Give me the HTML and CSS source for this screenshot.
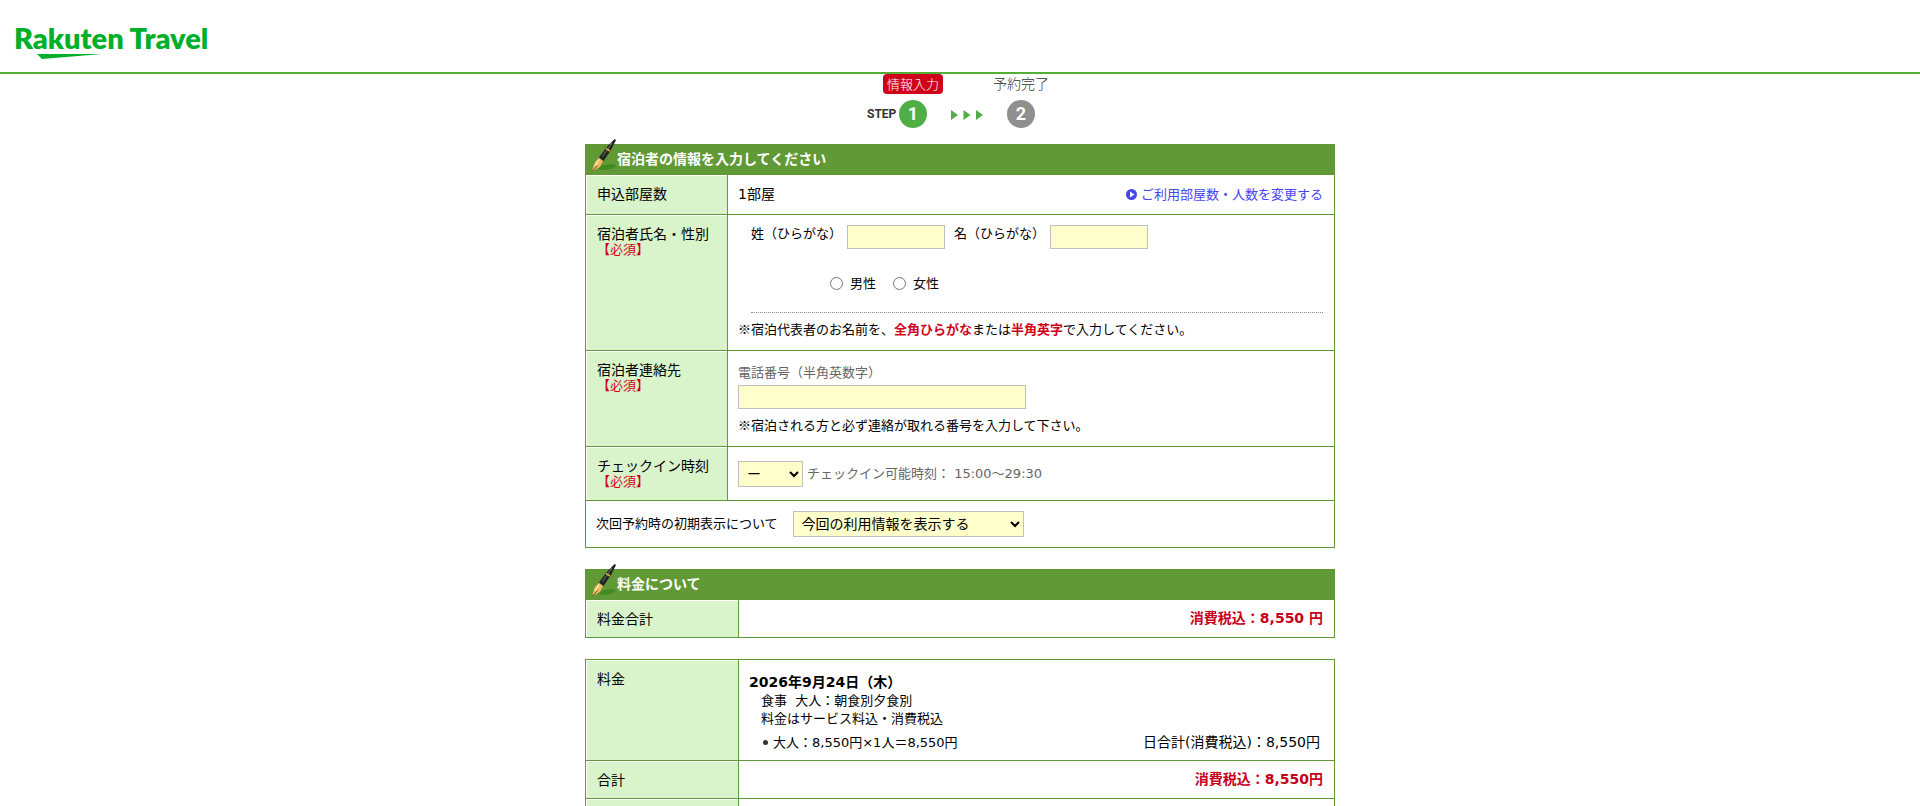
FILE: index.html
```html
<!DOCTYPE html>
<html lang="ja">
<head>
  <meta charset="UTF-8">
  <title>Rakuten Travel</title>
  <meta name="viewport" content="width=device-width, initial-scale=1.0">
  <link rel="stylesheet" href="styles.css">
</head>
<body>
  <svg class="defs" aria-hidden="true">
    <symbol id="pen" viewBox="0 0 26 33">
      <ellipse cx="16" cy="28" rx="9" ry="2.500" transform="rotate(-8 16 28)" fill="#3f8a22"/>
      <path d="M23.500 0 L25 1 L20 11 L12.500 22 L8 18.500 L15 9 Z" fill="#222"/>
      <path d="M21 4 L11.500 17.500" stroke="#777" stroke-width="1"/>
      <path d="M15 9.500 L19 12" stroke="#d9a441" stroke-width="1.500"/>
      <path d="M8 19 L12 22 L9 28 L1.500 32 L2 28.500 L4 23 Z" fill="#f0b95e"/>
      <path d="M8 20.500 L4 27" stroke="#fbe3ae" stroke-width="1.500"/>
      <path d="M6.500 26.500 L1.500 32" stroke="#6b4a18" stroke-width="1"/>
    </symbol>
  </svg>

  <header class="header">
    <a href="#" class="logo">
      <span class="logo-text">Rakuten Travel</span>
      <svg class="logo-mark" viewBox="0 0 65 5"><path d="M0 0 H65 L5 5 Z" fill="#00b02a"/></svg>
    </a>
  </header>

  <div class="steps">
    <div class="step-labels">
      <span class="step-current">情報入力</span>
      <span class="step-next">予約完了</span>
    </div>
    <div class="step-numbers">
      <span class="step-word">STEP</span>
      <span class="circle circle-on">1</span>
      <svg class="arrows" width="32" height="10" viewBox="0 0 32 10">
        <path d="M0 0 L7 5 L0 10 Z M12.500 0 L19.500 5 L12.500 10 Z M25 0 L32 5 L25 10 Z" fill="#50ae47"/>
      </svg>
      <span class="circle">2</span>
    </div>
  </div>

  <main class="container">
    <form class="section">
      <h2 class="title"><svg class="pen"><use href="#pen"/></svg>宿泊者の情報を入力してください</h2>
      <table class="form-table">
        <tr>
          <th scope="row">申込部屋数</th>
          <td>
            <div class="split">
              <span>1部屋</span>
              <a href="#" class="change-link">
                <svg width="11" height="11" viewBox="0 0 11 11"><circle cx="5.500" cy="5.500" r="5.500" fill="#4545ee"/><path d="M4 2.500 L8.500 5.500 L4 8.500 Z" fill="#fff"/></svg>
                ご利用部屋数・人数を変更する
              </a>
            </div>
          </td>
        </tr>
        <tr>
          <th scope="row">宿泊者氏名・性別<span class="required">【必須】</span></th>
          <td class="name-cell">
            <div class="guest">
              <div class="names">
                <label for="lastName">姓（ひらがな）</label>
                <input type="text" id="lastName" name="lastName" class="field">
                <label for="firstName">名（ひらがな）</label>
                <input type="text" id="firstName" name="firstName" class="field">
              </div>
              <div class="gender">
                <input type="radio" id="male" name="gender"><label for="male">男性</label>
                <input type="radio" id="female" name="gender"><label for="female">女性</label>
              </div>
            </div>
            <p class="note">※宿泊代表者のお名前を、<strong>全角ひらがな</strong>または<strong>半角英字</strong>で入力してください。</p>
          </td>
        </tr>
        <tr>
          <th scope="row">宿泊者連絡先<span class="required">【必須】</span></th>
          <td class="phone-cell">
            <label for="phone" class="hint">電話番号（半角英数字）</label>
            <input type="tel" id="phone" name="phone" class="field field-phone">
            <p class="note">※宿泊される方と必ず連絡が取れる番号を入力して下さい。</p>
          </td>
        </tr>
        <tr>
          <th scope="row"><label for="checkin">チェックイン時刻</label><span class="required">【必須】</span></th>
          <td class="checkin-cell">
            <div class="inline">
              <select id="checkin" name="checkin" class="field select-time"><option>ー</option></select>
              <span class="hint">チェックイン可能時刻： 15:00〜29:30</span>
            </div>
          </td>
        </tr>
        <tr>
          <td colspan="2">
            <div class="inline default-view">
              <label for="view">次回予約時の初期表示について</label>
              <select id="view" name="view" class="field select-view"><option>今回の利用情報を表示する</option></select>
            </div>
          </td>
        </tr>
      </table>
    </form>

    <section class="section">
      <h2 class="title"><svg class="pen"><use href="#pen"/></svg>料金について</h2>
      <table class="price-table">
        <tr>
          <th scope="row">料金合計</th>
          <td class="price">消費税込：8,550 円</td>
        </tr>
      </table>
    </section>

    <table class="price-table">
      <tr>
        <th scope="row">料金</th>
        <td class="detail-cell">
          <p class="date">2026年9月24日（木）</p>
          <p class="detail">食事&nbsp; 大人：朝食別夕食別</p>
          <p class="detail">料金はサービス料込・消費税込</p>
          <div class="split day">
            <span class="per-person">大人：8,550円×1人＝8,550円</span>
            <span>日合計(消費税込)：8,550円</span>
          </div>
        </td>
      </tr>
      <tr>
        <th scope="row">合計</th>
        <td class="price">消費税込：8,550円</td>
      </tr>
      <tr>
        <th></th>
        <td></td>
      </tr>
    </table>
  </main>
</body>
</html>
```

FILE: styles.css
```css
* {
  margin: 0;
  padding: 0;
  box-sizing: border-box;
}

body {
  font-family: "DejaVu Sans", "Noto Sans CJK JP", sans-serif;
  font-size: 14px;
  line-height: 16px;
  color: #000;
  background: #fff;
}

.defs {
  position: absolute;
  width: 0;
  height: 0;
}

/* header */
.header {
  padding: 23px 14px 13px;
  border-bottom: 2px solid #54ae36;
}

.logo {
  display: inline-block;
  vertical-align: top;
  color: #00b02a;
  text-decoration: none;
}

.logo-text {
  display: block;
  font-family: Lato, sans-serif;
  font-size: 29px;
  font-weight: 800;
  line-height: 30px;
}

.logo-mark {
  display: block;
  width: 65px;
  height: 5px;
  margin: 1px 0 0 23px;
}

/* steps */
.steps {
  width: 186px;
  margin: 0 auto 16px;
}

.step-labels {
  display: flex;
  gap: 50px;
  margin-left: 16px;
  line-height: 20px;
  font-family: "Noto Sans CJK JP", sans-serif;
  font-weight: 300;
}

.step-current {
  width: 60px;
  border-radius: 4px;
  background: #d0021b;
  color: #fff;
  font-size: 13px;
  text-align: center;
}

.step-next {
  color: #333;
  line-height: 18px;
}

.step-numbers {
  display: flex;
  align-items: center;
  margin-top: 6px;
  font-family: Roboto, sans-serif;
  font-weight: 700;
}

.step-word {
  width: 32px;
  font-size: 12px;
  color: #333;
}

.circle {
  width: 28px;
  border-radius: 50%;
  background: #8f8f8f;
  color: #fff;
  font-size: 18px;
  line-height: 28px;
  text-align: center;
}

.circle-on {
  background: #50ae47;
}

.arrows {
  margin: 2px 24px 0;
}

/* sections */
.container {
  max-width: 750px;
  margin: 0 auto;
}

.section {
  margin-bottom: 21px;
}

.title {
  position: relative;
  padding-left: 32px;
  background: #629937;
  color: #fff;
  font-size: 14px;
  line-height: 30px;
}

.pen {
  position: absolute;
  top: -5px;
  left: 6px;
  width: 26px;
  height: 33px;
}

table {
  width: 100%;
  border-collapse: collapse;
  table-layout: fixed;
}

th,
td {
  border: 1px solid #629937;
  text-align: left;
  vertical-align: top;
}

th {
  width: 142px;
  padding: 11px 0 10px 11px;
  background: #d9f3cb;
  box-shadow: inset 1px 1px 0 #fff;
  font-weight: normal;
  line-height: 16px;
}

.price-table th {
  width: 153px;
}

td {
  padding: 10px 11px 10px 10px;
}

.split {
  display: flex;
  justify-content: space-between;
  line-height: 19px;
}

.change-link {
  display: flex;
  align-items: center;
  gap: 4px;
  color: #4545ee;
  font-size: 13px;
  line-height: 17px;
  text-decoration: none;
}

.required {
  display: block;
  color: #d0021b;
  font-size: 13px;
}

.field {
  width: 98px;
  height: 24px;
  border: 1px solid #c0c0c0;
  border-radius: 0;
  background: #ffc;
  font-family: inherit;
  font-size: 14px;
}

.guest {
  margin-left: 13px;
  padding-bottom: 19px;
  border-bottom: 1px dotted #888;
  font-size: 13px;
}

.names {
  display: flex;
  gap: 5px;
  line-height: 17px;
}

.names input + label {
  margin-left: 4px;
}

.gender {
  display: flex;
  align-items: center;
  margin: 26px 0 0 79px;
  line-height: 18px;
}

.gender input {
  width: 13px;
  height: 13px;
  margin-bottom: 2px;
}

.gender label {
  margin: 0 17px 0 7px;
}

.note {
  margin-top: 8px;
  font-family: "Noto Sans CJK JP", sans-serif;
  font-size: 13px;
}

.note strong {
  color: #d0021b;
}

.name-cell {
  padding-bottom: 13px;
}

.phone-cell {
  padding-top: 13px;
  padding-bottom: 13px;
}

.hint {
  color: #666;
  font-size: 13px;
}

.field-phone {
  display: block;
  width: 288px;
  margin-top: 4px;
}

.inline {
  display: flex;
  align-items: center;
  gap: 4px;
}

.checkin-cell {
  padding-top: 14px;
  padding-bottom: 13px;
}

select.field {
  height: 26px;
  padding: 0 4px;
}

.select-time {
  width: 65px;
}

.default-view {
  gap: 15px;
  font-size: 13px;
}

.select-view {
  width: 231px;
}

.price {
  color: #c7001b;
  font-weight: bold;
  line-height: 17px;
  text-align: right;
}

.detail-cell {
  padding: 12px 14px 8px 10px;
}

.date {
  font-weight: bold;
  line-height: 20px;
}

.detail {
  margin-left: 12px;
  font-size: 13px;
  line-height: 18px;
}

.day {
  margin-top: 5px;
}

.per-person {
  display: flex;
  align-items: center;
  gap: 5px;
  margin-left: 14px;
  font-size: 13px;
}

.per-person::before {
  content: "";
  width: 5px;
  height: 5px;
  border-radius: 50%;
  background: #333;
}
```
